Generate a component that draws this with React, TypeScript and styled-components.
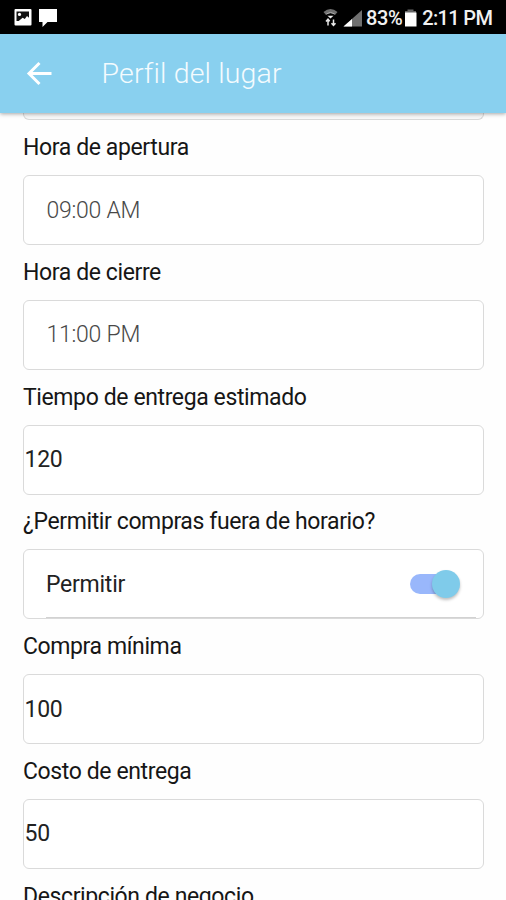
import React from "react";
import styled, { createGlobalStyle } from "styled-components";

const GlobalStyle = createGlobalStyle`
  * { box-sizing: border-box; }
  body { margin: 0; background: #fefefe; font-family: Roboto, "Liberation Sans", sans-serif; }
`;

const Screen = styled.div`
  display: flex;
  flex-direction: column;
  width: 506px;
  height: 900px;
  overflow: hidden;
`;

const StatusBar = styled.div`
  display: flex;
  flex: none;
  align-items: center;
  justify-content: space-between;
  height: 34px;
  padding: 1px 14px 0 14px;
  background: #000;
  color: #f1f1f1;
`;

const StatusGroup = styled.div`
  display: flex;
  align-items: center;
`;

const StatusText = styled.span<{ $width: number; $spacing: number }>`
  width: ${(p) => p.$width}px;
  font-size: 20px;
  line-height: 24px;
  font-weight: 500;
  letter-spacing: ${(p) => p.$spacing}px;
  white-space: nowrap;
`;

const Header = styled.header`
  display: flex;
  flex: none;
  align-items: center;
  gap: 48.5px;
  height: 79px;
  padding-left: 26px;
  background: #89d0ef;
  box-shadow: 0 1px 4px rgba(0, 0, 0, 0.35);
  z-index: 1;
`;

const Title = styled.h1`
  margin: 0;
  color: #f4fbfe;
  font-size: 28.5px;
  font-weight: 300;
  line-height: 36px;
  letter-spacing: 0.15px;
`;

const Form = styled.main`
  flex: 1;
  min-height: 0;
  padding: 0 22.5px 0 23px;
  overflow: hidden;
`;

const PreviousField = styled.div`
  height: 7px;
  border: 1.5px solid #d9d9d9;
  border-top: 0;
  border-radius: 0 0 6px 6px;
  background: #f8f8f8;
`;

const Field = styled.section`
  height: 124.8px;
`;

const Label = styled.label`
  display: block;
  height: 55px;
  padding-top: 13px;
  color: #161616;
  font-size: 23px;
  line-height: 30px;
  letter-spacing: -0.39px;
  white-space: nowrap;
`;

const Box = styled.div<{ $inset: number; $light?: boolean }>`
  display: flex;
  align-items: center;
  justify-content: space-between;
  height: 70px;
  padding: 0 23px 0 ${(p) => p.$inset}px;
  border: 1.5px solid #dadada;
  border-radius: 6px;
  background: #fff;
  color: ${(p) => (p.$light ? "#484848" : "#222")};
  font-size: 23px;
  font-weight: ${(p) => (p.$light ? 300 : 400)};
  line-height: 30px;
  letter-spacing: -0.25px;
`;

const Value = styled.span`
  padding-top: 1px;
`;

const SwitchBox = styled(Box)`
  background: linear-gradient(#d2d2d2, #d2d2d2) 22px 100% / 430px 1px no-repeat #fff;
`;

const Track = styled.div`
  display: flex;
  align-items: center;
  justify-content: flex-end;
  width: 50px;
  height: 20px;
  border-radius: 10px;
  background: linear-gradient(90deg, #99b7fb 40px, transparent 40px);
`;

const Thumb = styled.div`
  flex: none;
  width: 28px;
  height: 28px;
  border-radius: 50%;
  background: #7fcbea;
  box-shadow: 0 2px 3px rgba(0, 0, 0, 0.25);
`;

const fields = [
  { label: "Hora de apertura", value: "09:00 AM", inset: 22.5, light: true },
  { label: "Hora de cierre", value: "11:00 PM", inset: 22.5, light: true },
  { label: "Tiempo de entrega estimado", value: "120", inset: 0.5 },
  { label: "¿Permitir compras fuera de horario?", value: "Permitir", inset: 22, toggle: true },
  { label: "Compra mínima", value: "100", inset: 0.5 },
  { label: "Costo de entrega", value: "50", inset: 0.5 },
];

const NotificationIcons = () => (
  <svg width="46" height="22" viewBox="0 0 46 22">
    <rect x="0.5" y="2" width="17" height="16.5" rx="1" fill="#fff" />
    <path d="M2.5 4.5h12.5v6.2l-2-1.8-2.2 3-2.2-1.2-3.9 3.2h-2.2z" fill="#111" />
    <circle cx="5.5" cy="7.4" r="1.6" fill="#fff" />
    <path d="M25 2h18v13H33.5L28.5 20v-5H25z" fill="#fff" />
  </svg>
);

const SignalIcons = () => (
  <svg width="43" height="22" viewBox="0 0 43 22">
    <path d="M.5 5Q7.5-.8 14.5 5L12 8Q7.5 4.5 3 8z" fill="#707070" />
    <path d="M3.5 6.8Q7.5 4 11.5 6.8" fill="none" stroke="#aaa" />
    <path d="M4.5 8.7h6l-3 2.8z" fill="#eee" />
    <path d="M5 18.5v-6M3 14.5l2-2.3 1.7 2M10.5 12.5v6M8.5 16.3l2 2.2 2-2.2" fill="none" stroke="#e8e8e8" strokeWidth="1.5" />
    <path d="M20.5 19.5 39 3v16.5z" fill="#707070" />
    <path d="M20.5 19.5 29 12v7.5z" fill="#fff" />
  </svg>
);

const BatteryIcon = () => (
  <svg width="14" height="22" viewBox="0 0 14 22">
    <path d="M3.5 2.5h6V4H12v2H1V4h2.5z" fill="#666" />
    <path d="M1 5.5h11.5V19.5H1z" fill="#fff" />
  </svg>
);

const BackIcon = () => (
  <svg width="27" height="26" viewBox="0 0 27 26">
    <path d="M25.5 12.5H3M13.5 2 3 12.5 13.5 23" fill="none" stroke="#fff" strokeWidth="3" />
  </svg>
);

export default function App() {
  return (
    <>
      <GlobalStyle />
      <Screen>
        <StatusBar>
          <NotificationIcons />
          <StatusGroup>
            <SignalIcons />
            <StatusText $width={38} $spacing={-0.4}>83%</StatusText>
            <BatteryIcon />
            <StatusText $width={74} $spacing={-0.65}>
              &#8202;&#8202;&#8202;2:11 PM
            </StatusText>
          </StatusGroup>
        </StatusBar>
        <Header>
          <BackIcon />
          <Title>Perfil del lugar</Title>
        </Header>
        <Form>
          <PreviousField />
          {fields.map((field) => {
            const FieldBox = field.toggle ? SwitchBox : Box;
            return (
              <Field key={field.label}>
                <Label>{field.label}</Label>
                <FieldBox $inset={field.inset} $light={field.light}>
                  <Value>{field.value}</Value>
                  {field.toggle && (
                    <Track>
                      <Thumb />
                    </Track>
                  )}
                </FieldBox>
              </Field>
            );
          })}
          <Label>Descripción de negocio</Label>
        </Form>
      </Screen>
    </>
  );
}
